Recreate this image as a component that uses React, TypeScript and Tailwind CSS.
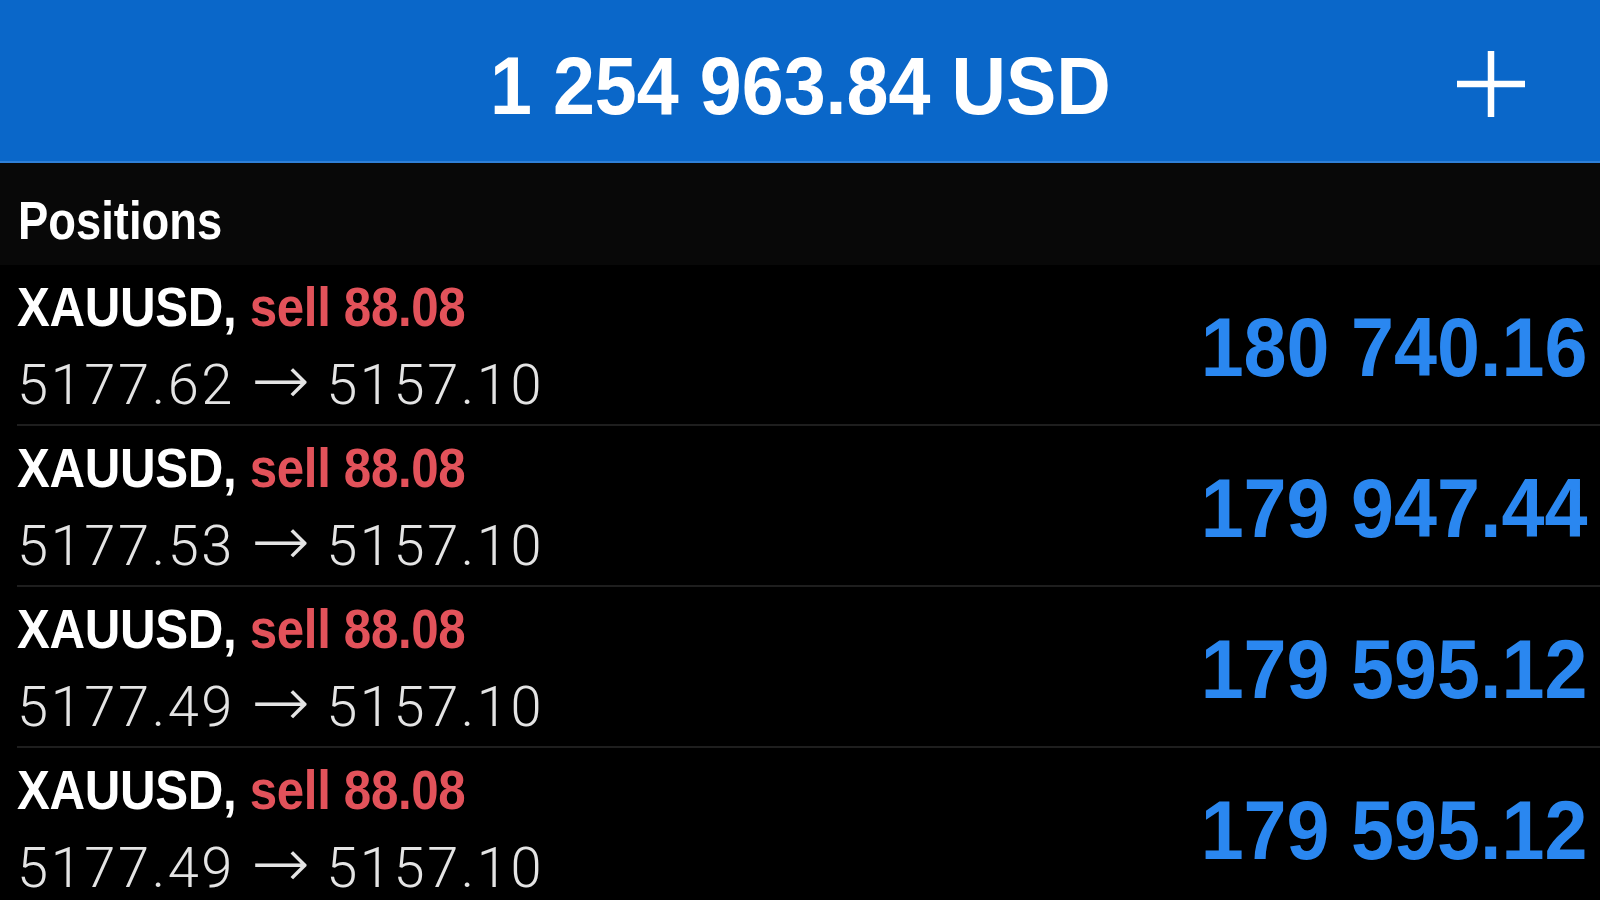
type Position = {
  symbol: string;
  side: string;
  volume: string;
  openPrice: string;
  currentPrice: string;
  profit: string;
};

const positions: Position[] = [
  { symbol: 'XAUUSD', side: 'sell', volume: '88.08', openPrice: '5177.62', currentPrice: '5157.10', profit: '180 740.16' },
  { symbol: 'XAUUSD', side: 'sell', volume: '88.08', openPrice: '5177.53', currentPrice: '5157.10', profit: '179 947.44' },
  { symbol: 'XAUUSD', side: 'sell', volume: '88.08', openPrice: '5177.49', currentPrice: '5157.10', profit: '179 595.12' },
  { symbol: 'XAUUSD', side: 'sell', volume: '88.08', openPrice: '5177.49', currentPrice: '5157.10', profit: '179 595.12' },
];

// condensed bold face: Arial-metric bold squeezed horizontally
const bold = "font-['Liberation_Sans',Arial,sans-serif] font-bold";
const light = "font-['Roboto','Liberation_Sans',sans-serif] font-light";

function PlusIcon() {
  return (
    <svg width="68" height="66" viewBox="0 0 68 66" fill="none">
      <path d="M34 0V66M0 33H68" stroke="white" strokeWidth="6.5" />
    </svg>
  );
}

function PositionRow({ p }: { p: Position }) {
  return (
    <div className="ml-[17px] h-[161px] shrink-0 flex items-center justify-between border-b-2 border-[#1e1e1e] pr-[13px]">
      {/* left: symbol / prices */}
      <div className="flex flex-col">
        <div
          className={`${bold} text-[56px] leading-none mt-[4px] tracking-[-0.4px] whitespace-nowrap scale-x-[0.88] origin-left`}
        >
          <span className="text-white">{p.symbol}, </span>
          <span className="text-[#e2525a]">
            {p.side} {p.volume}
          </span>
        </div>
        <div className={`${light} text-[56px] leading-none mt-[10px] tracking-[2.6px] text-[#e4e4e4] whitespace-nowrap`}>
          {p.openPrice}{' '}
          <span className="font-['DejaVu_Sans',sans-serif] font-extralight text-[70px] leading-none tracking-normal">→</span>{' '}
          {p.currentPrice}
        </div>
      </div>
      {/* right: profit */}
      <div
        className={`${bold} text-[84px] leading-none pt-[5px] text-[#2a87f0] whitespace-nowrap scale-x-[0.92] origin-right`}
      >
        {p.profit}
      </div>
    </div>
  );
}

export default function App() {
  return (
    <div className="w-[1600px] h-[900px] overflow-hidden bg-black flex flex-col">
      {/* Header balance */}
      <header className="relative h-[163px] shrink-0 bg-[#0a67c9] border-b-2 border-[#2f7fd6] flex items-center justify-center">
        <div className={`${bold} text-white text-[82px] leading-none pt-[10px] scale-x-[0.92]`}>1 254 963.84 USD</div>
        <button className="absolute right-[75px] top-[51px]">
          <PlusIcon />
        </button>
      </header>

      {/* Section title */}
      <div className="h-[102px] shrink-0 bg-[#080808] flex items-center pl-[18px] pt-[12px]">
        <span className={`${bold} inline-block text-white text-[54px] leading-none scale-x-[0.84] origin-left`}>
          Positions
        </span>
      </div>

      {/* Rows */}
      <div className="flex flex-col">
        {positions.map((p, i) => (
          <PositionRow key={i} p={p} />
        ))}
      </div>
    </div>
  );
}
